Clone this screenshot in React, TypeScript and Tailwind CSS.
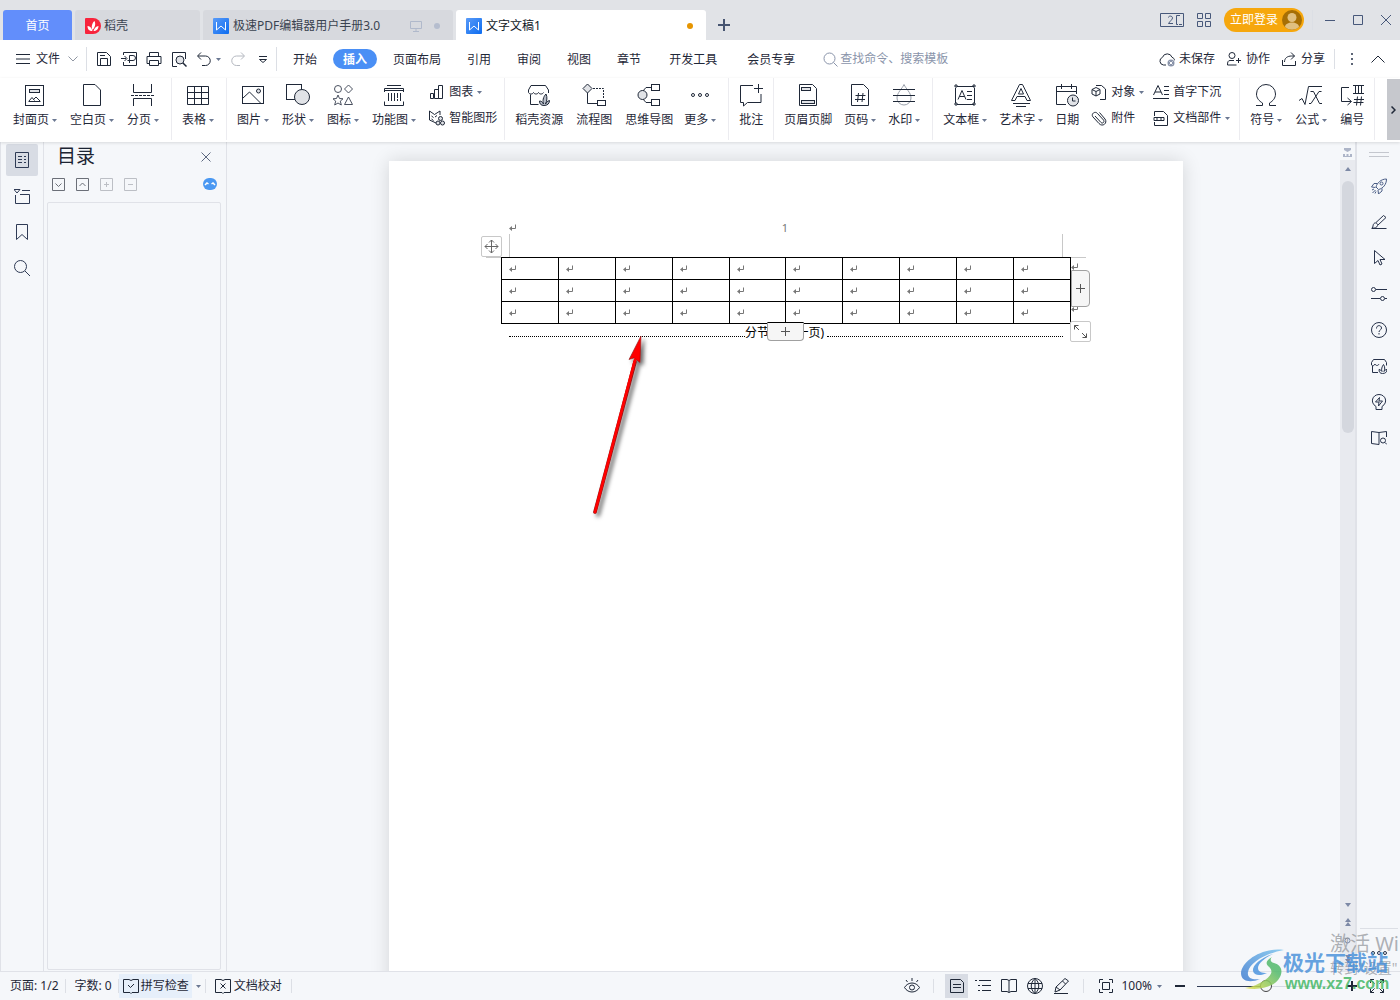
import { useState } from 'react'
import type { ReactNode } from 'react'

type IconProps = { w?: number; h?: number; className?: string; children: ReactNode }

function Icon({ w = 16, h = 16, className = '', children }: IconProps) {
  return (
    <svg
      width={w}
      height={h}
      viewBox={`0 0 ${w} ${h}`}
      fill="none"
      stroke="currentColor"
      strokeWidth="1"
      className={`shrink-0 ${className}`}
      aria-hidden="true"
    >
      {children}
    </svg>
  )
}

const Caret = () => (
  <Icon w={5} h={3} className="text-[#6b7892]">
    <path d="M0 0h5L2.5 3z" fill="currentColor" stroke="none" />
  </Icon>
)

const WpsLogo = () => (
  <Icon>
    <defs>
      <linearGradient id="wps" x1="0" y1="0" x2="1" y2="1">
        <stop offset="0" stopColor="#5a9bf8" />
        <stop offset="1" stopColor="#0c6cf0" />
      </linearGradient>
    </defs>
    <rect width="16" height="16" rx="1" fill="url(#wps)" stroke="none" />
    <path d="M3.5 4v8L8 8l4.500 4V4" stroke="#fff" />
  </Icon>
)

const ReturnMark = () => (
  <Icon w={8} h={8} className="text-[#777]">
    <path d="M6.5 0.5v4h-5" />
    <path d="M0 4.5l3-2.5v5z" fill="currentColor" stroke="none" />
  </Icon>
)

type RibbonItem = { label: string; icon: ReactNode; caret?: boolean; wide?: boolean }

const pageGroup: RibbonItem[] = [
  {
    label: '封面页',
    caret: true,
    icon: (
      <>
        <rect x="2.5" y="2.5" width="18" height="20" />
        <rect x="6.5" y="6.5" width="10" height="3" fill="#e1e3e7" />
        <path d="M5.5 18.5h12M6 18l3-3.5 2.5 3M10.5 16.5l2.5-2.5 4 4" />
      </>
    ),
  },
  { label: '空白页', caret: true, icon: <path d="M3.5 1.5h11.5l5.5 5.5v15.500h-17z" /> },
  {
    label: '分页',
    caret: true,
    icon: (
      <>
        <path d="M2.5 1v8.5h18V1M2.500 23v-7.500h18V23" />
        <path d="M0 12.5h24" strokeDasharray="3 1" />
      </>
    ),
  },
]

const tableGroup: RibbonItem[] = [
  {
    label: '表格',
    caret: true,
    icon: <path d="M1.5 3.5h21v18h-21zM1.5 9.5h21M1.5 15.5h21M8.500 3.500v18M15.500 3.500v18" />,
  },
]

const pictureGroup: RibbonItem[] = [
  {
    label: '图片',
    caret: true,
    icon: (
      <>
        <rect x="1.5" y="3.5" width="21" height="17" />
        <path d="M2 15l6.500-6L20 20.500" />
        <circle cx="17.500" cy="8" r="2" fill="#e1e3e7" />
      </>
    ),
  },
  {
    label: '形状',
    caret: true,
    icon: (
      <>
        <rect x="0.5" y="1.5" width="15" height="15" />
        <circle cx="16" cy="14" r="7.500" fill="#e1e3e7" />
      </>
    ),
  },
  {
    label: '图标',
    caret: true,
    icon: (
      <g stroke="#4a5160">
        <circle cx="7" cy="6" r="3.500" />
        <path d="M17.500 2l4 4-4 4-4-4z" />
        <path d="M7 12l1.500 3.500 3.500.3-2.700 2.300 1 3.900L7 20l-3.300 2 1-3.900L2 15.800l3.500-.3z" />
        <path d="M17.500 14l4 7.500h-8z" />
      </g>
    ),
  },
  {
    label: '功能图',
    caret: true,
    icon: (
      <>
        <path d="M5 2.500h14M2.500 9V5.500H5M19 5.500h2.500V9M4 5.500h16M2 7.500h20" />
        <path d="M6.500 10v8M9.500 10v8M12.500 10v8M15.500 10v5M15.500 16v2M18.500 10v8" />
        <path d="M2.500 18.500v4h3M21.500 18.500v4h-3M5 22.500h14" />
      </>
    ),
  },
]

const resourceGroup: RibbonItem[] = [
  {
    label: '稻壳资源',
    icon: (
      <>
        <path d="M4 2.500h14.500l3 4.500v3M4 2.500L1.500 7v2.500c1 2 4 2 5 0 1 2 4 2 5 0 1 2 4 2 5 0M3.500 11.500v10h8" />
        <path
          d="M17 22.500c-3 0-4.500-1.500-4.500-4.500 2 0 3 1 4 3-1-3-.5-7 2.500-10 1.500 3 1 7-.5 10 1-2 2-3 4-3.500 0 3-2 5-5.500 5z"
          fill="#b9bec9"
        />
      </>
    ),
  },
  {
    label: '流程图',
    wide: true,
    icon: (
      <>
        <path d="M5.500 1l4.500 4.500L5.500 10 1 5.500z" fill="#e1e3e7" />
        <path d="M5.500 10v10.500h10" />
        <path d="M11 5.500h10.500v10" strokeDasharray="2 1" />
        <rect x="15.500" y="17.500" width="8" height="5" />
      </>
    ),
  },
  {
    label: '思维导图',
    icon: (
      <>
        <path d="M5 9l4-4.500h6M5 15l4 4.500h6" />
        <circle cx="5.500" cy="12" r="4.500" fill="#e1e3e7" />
        <rect x="14.500" y="1.500" width="8" height="6" />
        <rect x="14.500" y="16.500" width="8" height="6" />
      </>
    ),
  },
  {
    label: '更多',
    caret: true,
    icon: (
      <>
        <circle cx="5" cy="12" r="1.500" />
        <circle cx="12" cy="12" r="1.500" />
        <circle cx="19" cy="12" r="1.500" />
      </>
    ),
  },
]

const commentGroup: RibbonItem[] = [
  { label: '批注', icon: <path d="M14 2.500H1.500v17h3v3.500l4-3.500h13.500V11M19.500 1v9M15 5.500h9" /> },
]

const headerGroup: RibbonItem[] = [
  {
    label: '页眉页脚',
    icon: (
      <>
        <path d="M3.500 1.500h13l4 4v17h-17z" />
        <rect x="5.500" y="4.500" width="9" height="3" fill="#e1e3e7" />
        <rect x="5.500" y="17.500" width="13" height="3" fill="#e1e3e7" />
      </>
    ),
  },
  {
    label: '页码',
    caret: true,
    icon: (
      <>
        <path d="M3.500 1.500h12l5 5v16h-17z" />
        <path d="M10.500 10l-1 9M15 10l-1 9M7.500 12.500h10M7 16.500h10" />
      </>
    ),
  },
  {
    label: '水印',
    caret: true,
    icon: (
      <>
        <path d="M12 1.500c2 4.500 7 8 7 13.500a7 7 0 0 1-14 0c0-5.500 5-9 7-13.500z" stroke="#9aa0ab" />
        <path d="M1 6.500h22M1 12.500h22M1 18.500h22" />
      </>
    ),
  },
]

const textGroup: RibbonItem[] = [
  {
    label: '文本框',
    caret: true,
    icon: (
      <>
        <path d="M4 3.500h17M4 21.500h17M2.500 5v15M21.500 5v15" />
        <path d="M2 2h2v2H2zM20 2h2v2h-2zM2 20h2v2H2zM20 20h2v2h-2z" />
        <path d="M5 16.500l4-9 4 9M6.500 13.500h5M14 8.500h5M14 12.500h5M14 16.500h5" />
      </>
    ),
  },
  {
    label: '艺术字',
    caret: true,
    icon: (
      <>
        <path d="M2.500 17.500L10.500 1.500h3l8 16h-3.500l-2-4h-8l-2 4zM9.500 11h5l-2.500-5.500z" />
        <path d="M4 20.500h17M7 23.500h10" />
      </>
    ),
  },
  {
    label: '日期',
    icon: (
      <>
        <path d="M11 21.500H1.500v-18h20V11M1.500 8.500h20M6.500 1v5M16.500 1v5" />
        <circle cx="18" cy="17.500" r="5.500" fill="#e1e3e7" />
        <path d="M17.500 14.500v3.500h3" />
      </>
    ),
  },
]

const symbolGroup: RibbonItem[] = [
  {
    label: '符号',
    caret: true,
    icon: <path d="M2 22.500h6.500v-2.500C5 18 2.500 15 2.500 11a9.500 9.500 0 0 1 19 0c0 4-2.500 7-6 9v2.500H22" />,
  },
  {
    label: '公式',
    caret: true,
    icon: <path d="M0 17.500l3-2 3 6 3.500-18H23M11.500 8.500h3l6 12h2.500M22.500 8.500H20l-8 12h-2" />,
  },
  {
    label: '编号',
    icon: (
      <>
        <path d="M9 4.500H1.500v14H11M7.500 15l4 3.500-4 3.500" />
        <path d="M13 2.500h11M13 10.500h11M15.500 2.500v8M18.500 2.500v8M21.500 2.500v8" />
        <path d="M17.500 13.500l-1 9M21.500 13.500l-1 9M14 16.500h10M13.500 19.500h10" />
      </>
    ),
  },
]

function RibbonButtons({ items }: { items: RibbonItem[] }) {
  return (
    <>
      {items.map((item) => (
        <button
          key={item.label}
          className={`flex shrink-0 flex-col items-center gap-[5px] rounded pt-[5px] hover:bg-gray-100 ${item.wide ? 'w-10' : ''}`}
        >
          <Icon w={24} h={24}>
            {item.icon}
          </Icon>
          <span className="flex items-center gap-[3px] leading-4 whitespace-nowrap">
            {item.label}
            {item.caret && <Caret />}
          </span>
        </button>
      ))}
    </>
  )
}

function SmallButton({ label, icon, caret }: RibbonItem) {
  return (
    <button className="flex items-center gap-1 leading-4 whitespace-nowrap hover:bg-gray-100">
      <Icon>{icon}</Icon>
      {label}
      {caret && <Caret />}
    </button>
  )
}

const menuTabs = ['开始', '插入', '页面布局', '引用', '审阅', '视图', '章节', '开发工具', '会员专享']
const extraTabs = ['开发工具', '会员专享']

const quickTools = [
  { label: '保存', icon: <path d="M1.500 1.500h9l4 4v9h-13zM4.500 14v-6.500h7V14M4 4.500h5" /> },
  {
    label: '输出为PDF',
    icon: <path d="M2.500 4V1.500h13v13h-13V11M0 7.500h5M3.500 5L6 7.500 3.500 10M8.500 12V4.500h3.500a2 2 0 0 1 0 5H6.500" />,
  },
  { label: '打印', icon: <path d="M3.500 5V1.500h9V5M3.500 12.500h-2.500v-7h14v7h-2.500M3.500 9.500h9v5h-9z" /> },
  {
    label: '打印预览',
    icon: (
      <>
        <path d="M6 15.500H1.500v-14h13V8" />
        <circle cx="9" cy="9" r="4" fill="#e1e3e7" />
        <path d="M12 12l3.500 3.500" strokeWidth="1.500" />
      </>
    ),
  },
]

const Divider = ({ className = '' }: { className?: string }) => (
  <span className={`w-px shrink-0 bg-[#dcdfe5] ${className}`} />
)

function TitleBar() {
  return (
    <header className="flex h-10 shrink-0 items-end bg-[#e1e3e7] pl-[3px] text-[#3a4350]">
      <nav className="flex shrink-0 items-end gap-[3px]">
        <button className="h-[30px] w-[69px] rounded-t-[3px] bg-[#628efb] pt-px text-white">首页</button>
        <button className="flex h-[30px] w-[125px] items-center gap-[3px] rounded-t-[3px] bg-[#d7d9de] pt-px pl-[10px]">
          <Icon>
            <path d="M1 0h7a8 8 0 1 1 0 16H1a1 1 0 0 1-1-1V1a1 1 0 0 1 1-1z" fill="#f8243c" stroke="none" />
            <path
              d="M7.500 13C4 13 2.500 11 2.500 8c2 0 3 1 4 2.500M7.500 12C6 9 7 5 9.500 3c1.500 3 .5 6.500-2 9zM8.500 13c1-3 2.500-4.500 5-5 0 3-2 5-5 5z"
              fill="#fff"
              stroke="none"
            />
          </Icon>
          稻壳
        </button>
        <button className="flex h-[30px] w-[250px] items-center rounded-t-[3px] bg-[#d7d9de] px-[10px] pt-px">
          <WpsLogo />
          <span className="ml-1">极速PDF编辑器用户手册3.0</span>
          <Icon w={12} h={12} className="ml-auto text-[#b0b9cb]">
            <path d="M.5 1.500h11v7H.5zM6 9v2M3 11.500h6" />
          </Icon>
          <span className="mr-[3px] ml-3 size-[6px] rounded-full bg-[#b5bdce]" />
        </button>
        <button className="flex h-[30px] w-[250px] items-center rounded-t-[3px] bg-white px-[10px] pt-px text-[#111a28]">
          <WpsLogo />
          <span className="ml-1">文字文稿1</span>
          <span className="mr-[3px] ml-auto size-[6px] rounded-full bg-[#e69500]" />
        </button>
      </nav>
      <button aria-label="新建" className="flex h-[30px] w-9 items-center justify-center text-[#475571]">
        <Icon w={12} h={12}>
          <path d="M6 0v12M0 6h12" strokeWidth="2" />
        </Icon>
      </button>

      <div className="ml-auto flex h-10 shrink-0 items-center pr-[9px] text-[#47587a]">
        <button aria-label="窗口排列">
          <Icon w={24} h={14}>
            <path d="M.5.500h23v13H.5zM20 2.500h-3.500v9H18M19 11.500h3" />
            <path d="M8.500 4.500c0-2 4-2 4 .5 0 1.500-2.500 3-4 5.500H13" />
          </Icon>
        </button>
        <button aria-label="应用" className="ml-[13px]">
          <Icon w={14} h={14}>
            <path d="M.5.500h5v5h-5zM8.500.500h5v5h-5zM.5 8.500h5v5h-5zM8.500 8.500h5v5h-5z" />
          </Icon>
        </button>
        <button className="ml-[13px] flex h-6 w-20 items-center justify-between rounded-full bg-[#f6a70d] pr-[2px] pl-[6px] text-white">
          立即登录
          <Icon w={20} h={20}>
            <circle cx="10" cy="10" r="10" fill="#a66f05" stroke="none" />
            <circle cx="10" cy="7.500" r="4.500" fill="#e0c080" stroke="none" />
            <path d="M3 17c0-6 14-6 14 0a10 10 0 0 1-14 0z" fill="#e0c080" stroke="none" />
          </Icon>
        </button>
        <Divider className="mx-2 h-5" />
        <button aria-label="最小化" className="ml-1">
          <Icon w={10} h={10}>
            <path d="M0 5.500h10" />
          </Icon>
        </button>
        <button aria-label="最大化" className="ml-[18px]">
          <Icon w={10} h={10}>
            <path d="M.5.500h9v9h-9z" />
          </Icon>
        </button>
        <button aria-label="关闭" className="ml-[18px]">
          <Icon w={10} h={10}>
            <path d="M0 0l10 10M10 0L0 10" />
          </Icon>
        </button>
      </div>
    </header>
  )
}

function MenuBar() {
  const [active, setActive] = useState('插入')

  return (
    <div className="flex h-[38px] shrink-0 items-center bg-white pl-4">
      <button className="flex shrink-0 items-center whitespace-nowrap">
        <Icon w={14} h={10}>
          <path d="M0 .5h14M0 5h14M0 9.500h14" />
        </Icon>
        <span className="ml-[6px]">文件</span>
        <Icon w={10} h={6} className="ml-2 text-[#9097a3]">
          <path d="M.5.500L5 5 9.500.500" />
        </Icon>
      </button>
      <Divider className="ml-2 h-6" />
      <div className="ml-[9px] flex shrink-0 items-center gap-[9px]">
        {quickTools.map((tool) => (
          <button key={tool.label} aria-label={tool.label}>
            <Icon>{tool.icon}</Icon>
          </button>
        ))}
        <button aria-label="撤销" className="flex items-center gap-1">
          <Icon>
            <path d="M5 1.500L1.500 5 5 8.500M2 5h7.500a4.500 4.500 0 0 1 0 9.500H6" />
          </Icon>
          <Caret />
        </button>
        <button aria-label="恢复" className="text-[#b4b8c0]">
          <Icon>
            <path d="M11 1.500L14.500 5 11 8.500M14 5H6.500a4.500 4.500 0 0 0 0 9.500H10" />
          </Icon>
        </button>
        <button aria-label="自定义">
          <Icon>
            <path d="M4 5.500h8M4.500 8.500h7L8 11.500z" />
          </Icon>
        </button>
      </div>
      <Divider className="ml-[5px] h-6" />
      <nav className="ml-[6px] flex shrink-0 items-center gap-[6px]">
        {menuTabs.map((tab) => (
          <button
            key={tab}
            onClick={() => setActive(tab)}
            className={`h-5 rounded-full leading-[22px] whitespace-nowrap ${extraTabs.includes(tab) ? 'px-3' : 'px-[10px]'} ${
              tab === active ? 'bg-[#4a8ff5] font-bold text-white' : 'hover:bg-gray-100'
            }`}
          >
            {tab}
          </button>
        ))}
      </nav>
      <label className="ml-4 flex items-center gap-[2px] text-[#8a94aa]">
        <Icon w={15} h={15}>
          <circle cx="6.500" cy="6.500" r="5.500" />
          <path d="M10.500 10.500l4 4" />
        </Icon>
        <input
          aria-label="查找命令"
          placeholder="查找命令、搜索模板"
          className="w-32 bg-transparent outline-none placeholder:text-[#8a94aa]"
        />
      </label>

      <div className="ml-auto flex shrink-0 items-center gap-[11px] pr-[15px] whitespace-nowrap">
        <button className="flex items-center gap-1">
          <Icon>
            <path d="M7 14H4.500a4 4 0 0 1-1-7.700 5 5 0 0 1 9.500 0c1.500.5 2.500 1.700 2.500 3" />
            <circle cx="12" cy="12" r="3.500" fill="#8a94aa" stroke="none" />
            <path d="M10.500 10.500l3 3M13.500 10.500l-3 3" stroke="#fff" />
          </Icon>
          未保存
        </button>
        <button className="flex items-center gap-1">
          <Icon>
            <circle cx="6" cy="4.500" r="3" />
            <path d="M8 9.500H4C2 9.500 1.500 11 1.500 14h9M10 9.500h5M12.500 7v5" />
          </Icon>
          协作
        </button>
        <button className="flex items-center gap-1">
          <Icon>
            <path d="M1.500 9v5.500h13V10M3.500 11c0-4 3-6 7-6h3M10 1.500L13.500 5 10 8.500" />
          </Icon>
          分享
        </button>
        <Divider className="-ml-[2px] h-5" />
        <button aria-label="更多选项" className="ml-1 text-[#5c6576]">
          <Icon w={4} h={14}>
            <path d="M1 1h2v2H1zM1 6h2v2H1zM1 11h2v2H1z" fill="currentColor" stroke="none" />
          </Icon>
        </button>
        <button aria-label="收起功能区" className="ml-[6px]">
          <Icon w={14} h={8}>
            <path d="M.5 7.500L7 1l6.500 6.500" />
          </Icon>
        </button>
      </div>
    </div>
  )
}

function Ribbon() {
  const group = 'flex shrink-0 items-start border-r border-[#ececf0] pl-[10px]'

  return (
    <div className="relative z-10 flex h-16 shrink-0 bg-white pb-[2px] shadow-[0_1px_3px_rgba(0,0,0,0.12)]">
      <div className="flex min-w-0 flex-1 overflow-hidden pl-[3px]">
        <div className={`${group} gap-[13px] pr-3`}>
          <RibbonButtons items={pageGroup} />
        </div>
        <div className={`${group} pr-3`}>
          <RibbonButtons items={tableGroup} />
        </div>
        <div className={`${group} gap-[13px] pr-[7px]`}>
          <RibbonButtons items={pictureGroup} />
          <div className="flex flex-col items-start gap-[10px] pt-[6px]">
            <SmallButton
              label="图表"
              caret
              icon={<path d="M1.500 9.500h3v5h-3zM5.500 5.500h4v9h-4zM9.500 1.500h4v13h-4z" />}
            />
            <SmallButton
              label="智能图形"
              icon={
                <>
                  <path d="M7 13L.5 10V1l5 3.500L11 1v4M2.500 6l2 1.500M2.500 9l2 1.500M8 5.500l-2 1.500" />
                  <circle cx="11.500" cy="8.500" r="2" fill="#e1e3e7" />
                  <circle cx="9" cy="13" r="2" fill="#e1e3e7" />
                  <circle cx="13.500" cy="13" r="2" fill="#e1e3e7" />
                </>
              }
            />
          </div>
        </div>
        <div className={`${group} gap-[11px] pr-3`}>
          <RibbonButtons items={resourceGroup} />
        </div>
        <div className={`${group} pr-[10px]`}>
          <RibbonButtons items={commentGroup} />
        </div>
        <div className={`${group} gap-3 pr-3`}>
          <RibbonButtons items={headerGroup} />
        </div>
        <div className={`${group} gap-3 pr-[9px]`}>
          <RibbonButtons items={textGroup} />
          <div className="flex gap-[9px]">
            <div className="flex flex-col items-start gap-[10px] pt-[6px]">
              <SmallButton
                label="对象"
                caret
                icon={
                  <>
                    <path d="M5 1.500h5.500l4 3.500v10.500H9" />
                    <path d="M5 3.500l4 2v4.500L5 12 1 10V5.500zM1 5.500l4 2 4-2M5 7.500V12" />
                  </>
                }
              />
              <SmallButton
                label="附件"
                icon={<path d="M4 6l6 6.500c1.500 1.500 4-.5 2.500-2.500L6.500 3.500C4 .5-.5 4 2 7l6 6.500c3.500 4 9-.5 6-4.500L8.500 2.500" />}
              />
            </div>
            <div className="flex flex-col items-start gap-[10px] pt-[6px]">
              <SmallButton
                label="首字下沉"
                icon={<path d="M.5 11L5 1.500 9.500 11M2 8h6M11 2.500h5M11 6.500h5M11 10.500h5M0 14.500h16" />}
              />
              <SmallButton
                label="文档部件"
                caret
                icon={<path d="M1.500 6V1.500h9l4 4v10h-13V12M1 7.500h10v3H1zM4 7.500v3M8 7.500v3" />}
              />
            </div>
          </div>
        </div>
        <div className={`${group} gap-[13px] pr-[10px]`}>
          <RibbonButtons items={symbolGroup} />
        </div>
      </div>
      <button aria-label="向右滚动" className="mt-px flex w-[13px] items-center justify-center bg-[#c6c8cd]">
        <Icon w={5} h={8}>
          <path d="M.5.500L4 4 .5 7.500" strokeWidth="1.500" />
        </Icon>
      </button>
    </div>
  )
}

function LeftRail() {
  const items = [
    { label: '目录', icon: <path d="M1.500.500h13v15h-13zM4 4.500h4M10 4.500h2M4 7.500h4M10 7.500h2M4 10.500h4M10 10.500h2" /> },
    { label: '章节', icon: <path d="M0 1.500h6L3 5zM8 2.500h8M1.500 7v8.500h14V6.500H6" /> },
    { label: '书签', icon: <path d="M2.500.500h11v15L8 10.500l-5.500 5z" /> },
    {
      label: '查找',
      icon: (
        <>
          <circle cx="6.500" cy="6.500" r="6" />
          <path d="M11 11l5 5" />
        </>
      ),
    },
  ]

  return (
    <aside className="flex w-11 shrink-0 flex-col items-center gap-1 border-x border-[#e0e2e8] pt-[2px] text-[#2f3b55]">
      {items.map((item, i) => (
        <button
          key={item.label}
          aria-label={item.label}
          className={`flex h-8 w-8 items-center justify-center rounded-[2px] ${i === 0 ? 'bg-[#d8dce4]' : ''}`}
        >
          <Icon>{item.icon}</Icon>
        </button>
      ))}
    </aside>
  )
}

function OutlinePanel() {
  return (
    <section className="flex w-[183px] shrink-0 flex-col border-r border-[#e0e2e8] pr-[5px] pl-[3px]">
      <div className="flex h-[30px] items-center justify-between pr-[10px] pl-[10px]">
        <h2 className="text-[19px] text-[#1c2433]">目录</h2>
        <button aria-label="关闭目录" className="text-[#5c6880]">
          <Icon w={10} h={10}>
            <path d="M.5.500l9 9M9.500.500l-9 9" />
          </Icon>
        </button>
      </div>
      <div className="flex h-6 items-center gap-[11px] pr-1 pl-[5px] text-[#6b6f78]">
        <button aria-label="展开">
          <Icon w={13} h={13}>
            <path d="M.5.500h12v12H.5zM3.500 5.500l3 3 3-3" />
          </Icon>
        </button>
        <button aria-label="折叠">
          <Icon w={13} h={13}>
            <path d="M.5.500h12v12H.5zM3.500 8l3-3 3 3" />
          </Icon>
        </button>
        <button aria-label="升级" className="text-[#bcbfc5]">
          <Icon w={13} h={13}>
            <path d="M.5.500h12v12H.5zM6.500 4v5M4 6.500h5" />
          </Icon>
        </button>
        <button aria-label="降级" className="text-[#bcbfc5]">
          <Icon w={13} h={13}>
            <path d="M.5.500h12v12H.5zM4 6.500h5" />
          </Icon>
        </button>
        <button aria-label="智能目录" className="ml-auto">
          <Icon w={14} h={12}>
            <rect width="14" height="12" rx="6" fill="#4a98f2" stroke="none" />
            <path d="M2 7l2-2 1.500 1M12 7l-2-2-1.500 1" stroke="#fff" strokeWidth="1.500" />
          </Icon>
        </button>
      </div>
      <div className="mt-[6px] mb-px flex-1 rounded-[2px] border border-[#e0e2e8]" />
    </section>
  )
}

function Document() {
  return (
    <div className="relative h-[1123px] w-[794px] shrink-0 bg-white pt-[60px] shadow-[0_0_18px_rgba(0,0,0,0.14)]">
      <div className="mx-[120px] flex h-[13px] items-center">
        <ReturnMark />
        <span className="flex-1 pt-px pr-[10px] text-center text-[11px] text-[#777]">1</span>
      </div>
      <div className="mx-[120px] h-[23px] border-x border-[#c8c8c8]" />

      <div className="relative mx-[112px]">
        <table className="w-full table-fixed border-collapse">
          <tbody>
            {[0, 1, 2].map((row) => (
              <tr key={row}>
                {Array.from({ length: 10 }, (_, col) => (
                  <td key={col} className="h-[22px] border border-black p-0 pl-[7px]">
                    <ReturnMark />
                  </td>
                ))}
              </tr>
            ))}
          </tbody>
        </table>

        <span className="absolute top-0 -left-[15px] w-[15px] border-t border-[#c8c8c8]" />
        <span className="absolute top-0 -right-[15px] w-[15px] border-t border-[#c8c8c8]" />
        <div className="absolute top-[6px] left-full flex flex-col gap-[34px]">
          <ReturnMark />
          <ReturnMark />
        </div>
        <button
          aria-label="移动表格"
          className="absolute -top-[21px] -left-5 flex size-[21px] items-center justify-center rounded-[2px] border border-[#c8c8c8] bg-white text-[#666]"
        >
          <Icon w={15} h={15}>
            <path d="M7.500 1v13M1 7.500h13M5 3.500L7.500 1 10 3.500M5 11.500L7.500 14l2.500-2.500M3.500 5L1 7.500 3.500 10M11.500 5L14 7.500 11.500 10" />
          </Icon>
        </button>
        <button
          aria-label="添加列"
          className="absolute top-[13px] left-full flex h-[37px] w-[19px] items-center justify-center rounded-r-[4px] border border-[#a0a0a0] bg-[#f6f6f6] text-[#555]"
        >
          <Icon w={9} h={9}>
            <path d="M4.500 0v9M0 4.500h9" />
          </Icon>
        </button>
        <button
          aria-label="添加行"
          className="absolute top-[65px] left-[266px] z-10 flex h-[19px] w-[37px] items-center justify-center rounded-b-[4px] border border-t-black border-[#a0a0a0] bg-[#f6f6f6] text-[#555]"
        >
          <Icon w={9} h={9}>
            <path d="M4.500 0v9M0 4.500h9" />
          </Icon>
        </button>
        <button
          aria-label="调整表格大小"
          className="absolute top-[64px] left-[569px] flex size-[21px] items-center justify-center rounded-[2px] border border-[#c8c8c8] bg-white text-[#555]"
        >
          <Icon w={15} h={15}>
            <path d="M1.500 5.500v-4h4M1.500 1.500L6 6M13.500 9.500v4h-4M13.500 13.500L9 9" />
          </Icon>
        </button>
      </div>

      <div className="mx-[120px] flex h-[18px] items-center text-black">
        <span className="mt-[7px] flex-1 border-t border-dotted border-black" />
        <span className="pr-[3px]">分节符(下一页)</span>
        <span className="mt-[7px] flex-1 border-t border-dotted border-black" />
      </div>

      <svg className="pointer-events-none absolute top-[169px] left-[195px] h-[195px] w-[75px]" viewBox="0 0 75 195">
        <defs>
          <filter id="arrow-shadow" x="-30%" y="-10%" width="180%" height="120%">
            <feDropShadow dx="3" dy="3" stdDeviation="2" floodColor="#000" floodOpacity="0.6" />
          </filter>
        </defs>
        <g filter="url(#arrow-shadow)">
          <path d="M11 182L51 32" stroke="#8a1a1a" strokeWidth="3.600" strokeLinecap="round" />
          <path d="M57 6L45 29.500l5-1.500 6 4.500z" fill="#f00" stroke="#8a1a1a" strokeWidth="0.600" />
          <path d="M11 182L51 30" stroke="#f00" strokeWidth="2.800" strokeLinecap="round" />
        </g>
      </svg>
    </div>
  )
}

function ScrollBar() {
  return (
    <div className="flex w-[15px] shrink-0 flex-col items-center text-[#7d89a6]">
      <div className="flex h-[18px] items-end justify-center pb-[3px]">
        <Icon w={9} h={9} className="text-[#adb5c8]">
          <path d="M1 0h7v2L4.500 4 1 2zM0 6h2v3H0zM3.500 6h2v3h-2zM7 6h2v3H7zM0 8h9v1H0z" fill="currentColor" stroke="none" />
        </Icon>
      </div>
      <div className="flex w-full flex-1 flex-col items-center bg-[#e8eaef] pb-2">
        <Icon w={6} h={4} className="mt-[7px]">
          <path d="M0 4l3-4 3 4z" fill="currentColor" stroke="none" />
        </Icon>
        <div className="mt-[10px] h-[252px] w-3 rounded-full bg-[#d4d7de]" />
        <div className="mt-auto flex flex-col items-center gap-[11px]">
          <Icon w={6} h={4}>
            <path d="M0 0h6L3 4z" fill="currentColor" stroke="none" />
          </Icon>
          <Icon w={6} h={8}>
            <path d="M0 4l3-4 3 4zM0 8l3-4 3 4z" fill="currentColor" stroke="none" />
          </Icon>
          <Icon w={7} h={7}>
            <circle cx="3.500" cy="3.500" r="2.500" />
          </Icon>
          <Icon w={6} h={8}>
            <path d="M0 0h6L3 4zM0 4h6L3 8z" fill="currentColor" stroke="none" />
          </Icon>
        </div>
      </div>
    </div>
  )
}

function RightRail() {
  const tools = [
    {
      label: '快捷',
      icon: (
        <g stroke="#4a5d85">
          <path d="M5 9c1-4 5-8 10.500-8C15.500 6.500 12 10.500 7.500 11.500zM6 5.500H3L.5 9l4 .5M11 10.500V13l-3.500 3-.5-4M1 12l2-1M1.500 15l3-3M4 15.500l1-2" />
          <circle cx="10.500" cy="5.500" r="1.500" />
        </g>
      ),
    },
    {
      label: '样式',
      icon: <path d="M.5 14.500h15M1 14c1.500-1 .5-3 2-4.500s4 0 3.500 2S4 14.500 1 14zM5 8.500l7.500-7 2.500 2-8 7.500" />,
    },
    { label: '选择', icon: <path d="M3.500.500v13l3.500-3 2 4.500 2-1-2-4.500h5z" /> },
    {
      label: '属性',
      icon: (
        <>
          <circle cx="2.500" cy="3.500" r="2" />
          <circle cx="11.500" cy="12.500" r="2" />
          <path d="M5 3.500h11M0 12.500h9M14 12.500h2" />
        </>
      ),
    },
    {
      label: '帮助',
      icon: (
        <>
          <circle cx="8" cy="8" r="7.500" />
          <path d="M5.500 6.500c0-4 5-3.500 5-.500 0 2-2.500 2-2.500 4M8 11v1.500" />
        </>
      ),
    },
    {
      label: '稻壳资源',
      icon: (
        <>
          <path d="M2.500 1.500h11l2 3v3M2.500 1.500L.5 4.500V7c1.500 1 2.500 1 3.500-1 1 2 3 2 4 0M1.500 8v6.500H7" />
          <path d="M11.500 15.500C9 15.500 8 14 8 11.500c1.500 0 2 1 3 2-1-2 0-5 1.500-7 1.500 2 1.500 5 .5 7 .5-1 1.500-2 3-2 0 2.500-1.500 4-4.500 4z" />
        </>
      ),
    },
    {
      label: '灵感',
      icon: <path d="M5 15.500v-3C-1.500 8.500 1.500.5 8 .5s9.500 8 3 12v3zM8.500 3.500L4.500 8H8l-.5 4 4-5H8z" />,
    },
    {
      label: '阅读',
      icon: (
        <>
          <path d="M8 14.500l-7.500-1v-12l7.500 1 7.500-1V7M8 2.500v12" />
          <circle cx="12" cy="10.500" r="2.500" />
          <path d="M14 12.500l2 2" />
        </>
      ),
    },
  ]

  return (
    <aside className="flex w-[45px] shrink-0 flex-col items-center border-l-2 border-[#e0e2e8] pt-[10px] text-[#27324a]">
      <span className="h-[5px] w-5 border-y border-[#c4c7ce]" />
      <div className="mt-[21px] flex flex-col gap-5">
        {tools.map((tool) => (
          <button key={tool.label} aria-label={tool.label}>
            <Icon>{tool.icon}</Icon>
          </button>
        ))}
      </div>
      <button
        aria-label="更多工具"
        className="mt-auto flex h-[43px] w-[38px] items-center justify-center border-t border-[#dcdfe5] pt-[5px]"
      >
        <Icon w={16} h={4}>
          <circle cx="2" cy="2" r="1.500" />
          <circle cx="8" cy="2" r="1.500" />
          <circle cx="14" cy="2" r="1.500" />
        </Icon>
      </button>
    </aside>
  )
}

function StatusBar() {
  const [zoom, setZoom] = useState(50)
  const views = [
    { label: '大纲', icon: <path d="M0 2.500h2M4 2.500h12M3 7.500h2M7 7.500h9M3 12.500h2M7 12.500h9" /> },
    { label: '阅读版式', icon: <path d="M8 14.500l-2-1H.5v-12H6l2 1 2-1h5.500v12H10zM8 2.500v12" /> },
    {
      label: 'Web版式',
      icon: <path d="M8 .5a7.500 7.500 0 1 1 0 15 7.500 7.500 0 0 1 0-15zM8 .5v15M8 .5c-5 4-5 11 0 15M8 .5c5 4 5 11 0 15M1 5.500h14M1 10.500h14" />,
    },
    { label: '写作模式', icon: <path d="M1 15.500h14M2 14l1-5 9-8.500 3.500 2.500L7 12zM3 9l4 3M9.500 3l3 3" /> },
  ]

  return (
    <footer className="relative flex h-[29px] shrink-0 items-center border-t border-[#e0e2e8] bg-[#f5f7fa] whitespace-nowrap text-[#1f2838]">
      <span className="pr-[6px] pl-[10px]">页面: 1/2</span>
      <Divider className="h-[14px]" />
      <span className="pr-[6px] pl-[9px]">字数: 0</span>
      <Divider className="h-[14px]" />
      <button className="flex h-6 items-center gap-[2px] bg-[#e6effa] pr-[3px] pl-1">
        <Icon>
          <path d="M7 14.500H.500v-13H6l2 1 2-1h5.500v13H9l-1 1zM5 7l2.500 2.500L11 6" />
        </Icon>
        拼写检查
      </button>
      <button aria-label="拼写检查选项" className="px-1">
        <Caret />
      </button>
      <Divider className="h-[14px]" />
      <button className="flex items-center gap-[3px] pr-[9px] pl-[9px]">
        <Icon>
          <path d="M7 14.500H.500v-13H6l2 1 2-1h5.500v13H9l-1 1zM5.500 5.500l5 5M10.500 5.500l-5 5" />
        </Icon>
        文档校对
      </button>
      <Divider className="h-[14px]" />

      <div className="ml-auto flex shrink-0 items-center pr-4">
        <button aria-label="护眼模式">
          <Icon>
            <path d="M.5 9.500C4 3.500 12 3.500 15.500 9.500 12 15.500 4 15.500.5 9.500zM8 3V0M3.500 4L2 2M12.500 4L14 2" />
            <circle cx="8" cy="9.500" r="2.500" />
          </Icon>
        </button>
        <Divider className="mr-[11px] ml-[13px] h-[14px]" />
        <button aria-label="页面视图" className="flex h-6 w-[23px] items-center justify-center bg-[#d8dce4]">
          <Icon>
            <path d="M1.500 1.500h10l3 3v10h-13zM4 6.500h8M4 9.500h8" />
          </Icon>
        </button>
        <div className="ml-[7px] flex gap-[10px]">
          {views.map((view) => (
            <button key={view.label} aria-label={view.label}>
              <Icon>{view.icon}</Icon>
            </button>
          ))}
        </div>
        <Divider className="mr-[15px] ml-[14px] h-[14px]" />
        <button aria-label="适合页面">
          <Icon w={14} h={14}>
            <path d="M.5 4V.500H4M10 .5h3.500V4M13.500 10v3.500H10M4 13.500H.500V10M3.500 3.500h7v7h-7z" />
          </Icon>
        </button>
        <button className="ml-2 flex items-center gap-[5px]">
          100%
          <Caret />
        </button>
        <button aria-label="缩小" className="ml-[13px]">
          <Icon w={10} h={10}>
            <path d="M0 5h10" strokeWidth="2" />
          </Icon>
        </button>
        <input
          type="range"
          aria-label="显示比例"
          value={zoom}
          onChange={(e) => setZoom(Number(e.target.value))}
          className="mx-3 h-px w-[138px] appearance-none bg-[linear-gradient(to_right,#2f3b55_50%,#d5d9e2_50%)] [&::-webkit-slider-thumb]:size-3 [&::-webkit-slider-thumb]:appearance-none [&::-webkit-slider-thumb]:rounded-full [&::-webkit-slider-thumb]:border [&::-webkit-slider-thumb]:border-[#444] [&::-webkit-slider-thumb]:bg-[#f5f7fa]"
        />
        <button aria-label="放大">
          <Icon w={10} h={10}>
            <path d="M5 0v10M0 5h10" strokeWidth="2" />
          </Icon>
        </button>
        <button aria-label="全屏" className="ml-[13px]">
          <Icon w={14} h={14}>
            <path d="M.5 4V.500H4M.5.500l4 4M10 .5h3.500V4M13.500.500l-4 4M13.500 10v3.500H10M13.500 13.500l-4-4M4 13.500H.500V10M.5 13.500l4-4" />
          </Icon>
        </button>
      </div>
    </footer>
  )
}

function Watermark() {
  return (
    <div className="pointer-events-none absolute right-0 bottom-0 z-20 h-[70px] w-[160px] overflow-hidden whitespace-nowrap">
      <div className="absolute top-0 left-[90px] text-[#8d9096]/70">
        <p className="text-[20px] leading-[28px]">激活 Wi</p>
        <p className="text-[14px] leading-[20px]">转到"设置"</p>
      </div>
      <svg className="absolute top-[19px] left-0 h-[42px] w-[46px]" viewBox="0 0 46 42">
        <defs>
          <linearGradient id="swirl-blue" x1="1" y1="0" x2="0" y2="1">
            <stop offset="0" stopColor="#7cc4ee" />
            <stop offset="1" stopColor="#3f7cd0" />
          </linearGradient>
          <linearGradient id="swirl-green" x1="1" y1="0" x2="0" y2="1">
            <stop offset="0.300" stopColor="#52b96b" />
            <stop offset="1" stopColor="#e9e04a" />
          </linearGradient>
        </defs>
        <path d="M44 1C22-2 2 12 1 24c0 9 10 10 19 6-8 1-13-1-12-7C10 13 27 4 44 1z" fill="url(#swirl-blue)" opacity="0.850" />
        <path d="M33 5C20 9 12 17 13 22c1 5 8 5 14 2-5 0-9-1-9-5 0-5 8-11 15-14z" fill="#4b94de" opacity="0.850" />
        <path d="M32 8c-5 3-7 6-4 9 5 4 5 8-3 14-6 4-13 7-20 8 14 3 30-1 35-11 4-8-1-13-6-14-4-1-4-4-2-6z" fill="url(#swirl-green)" opacity="0.850" />
      </svg>
      <p className="absolute top-[18px] left-[43px] text-[21px] leading-[28px] font-bold text-[#3f8bd8]/80">极光下载站</p>
      <p className="absolute top-[43px] left-[45px] font-['Liberation_Sans','Noto_Sans_CJK_SC',sans-serif] text-[16px] leading-[22px] font-bold text-[#4cba6c]/90">
        www.xz7.com
      </p>
    </div>
  )
}

export default function App() {
  return (
    <div className="relative flex h-screen flex-col overflow-hidden bg-[#f5f7fa] font-['Noto_Sans','Noto_Sans_CJK_SC',sans-serif] text-xs text-[#1f2838]">
      <TitleBar />
      <MenuBar />
      <Ribbon />
      <main className="flex min-h-0 flex-1">
        <LeftRail />
        <OutlinePanel />
        <div className="flex min-w-0 flex-1 items-start justify-center self-stretch overflow-hidden pt-[19px] pl-[5px]">
          <Document />
        </div>
        <ScrollBar />
        <RightRail />
      </main>
      <StatusBar />
      <Watermark />
    </div>
  )
}
